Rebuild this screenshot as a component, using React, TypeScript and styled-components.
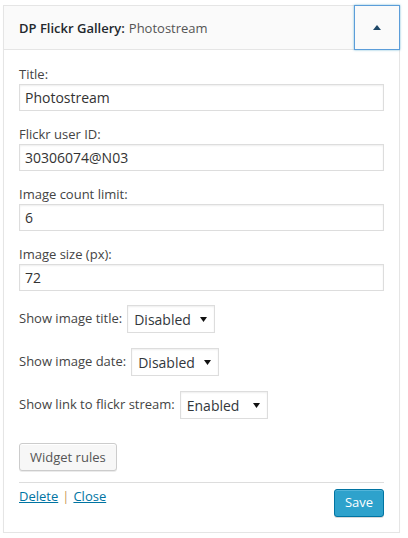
import * as React from "react";
import styled, { createGlobalStyle } from "styled-components";

const GlobalStyle = createGlobalStyle`
  html, body {
    margin: 0;
    padding: 0;
    background: #fff;
  }
  body {
    font-family: "Open Sans", "Noto Sans", sans-serif;
    font-size: 13px;
    color: #444;
  }
`;

const Page = styled.div`
  padding: 5px 0 0 3px;
`;

const Widget = styled.div`
  width: 397px;
  box-sizing: border-box;
  border: 1px solid #e5e5e5;
  background: #fff;
  box-shadow: 0 1px 1px rgba(0, 0, 0, 0.04);
`;

const Header = styled.div`
  display: flex;
  align-items: stretch;
  height: 43px;
  background: #fafafa;
  border-bottom: 1px solid #e5e5e5;
`;

const HeaderTitle = styled.h3`
  flex: 1;
  display: flex;
  align-items: center;
  margin: 0;
  padding-left: 15px;
  font-size: 13px;
  font-weight: 600;
  color: #23282d;
`;

const InTitle = styled.span`
  font-weight: 400;
  color: #555;
  margin-left: 4px;
`;

const Toggle = styled.button`
  width: 46px;
  margin: -1px -1px -1px 0;
  padding: 0;
  display: flex;
  align-items: center;
  justify-content: center;
  background: #fafafa;
  border: 1px solid #5b9dd9;
  box-shadow: 0 0 2px rgba(30, 140, 190, 0.6);
  cursor: pointer;
`;

const Body = styled.div`
  padding: 15px 15px 15px;
`;

const Fields = styled.div`
  display: flex;
  flex-direction: column;
  gap: 14px;
`;

const Field = styled.div`
  display: flex;
  flex-direction: column;
`;

const Label = styled.label`
  display: block;
  line-height: 18px;
  margin-bottom: 1px;
  color: #444;
`;

const TextInput = styled.input`
  box-sizing: border-box;
  width: 100%;
  height: 27px;
  margin: 0;
  padding: 0 5px;
  border: 1px solid #ddd;
  box-shadow: inset 0 1px 2px rgba(0, 0, 0, 0.07);
  font-family: inherit;
  font-size: 14px;
  color: #333;
  background: #fff;
  outline: none;
`;

const Options = styled.div`
  display: flex;
  flex-direction: column;
  gap: 15px;
  margin-top: 14px;
`;

const OptionRow = styled.div`
  display: flex;
  align-items: center;
  gap: 5px;
`;

const OptionLabel = styled.label`
  line-height: 18px;
  margin-top: -3px;
  color: #444;
`;

const SelectBox = styled.div`
  box-sizing: border-box;
  width: 88px;
  height: 28px;
  display: flex;
  align-items: center;
  border: 1px solid #ddd;
  background: #fff;
  box-shadow: inset 0 1px 2px rgba(0, 0, 0, 0.07);
  padding: 0 7px 0 0;
`;

const NativeSelect = styled.select`
  flex: 1;
  min-width: 0;
  appearance: none;
  -webkit-appearance: none;
  border: none;
  background: transparent;
  padding: 0 0 0 6px;
  margin: 0;
  font-family: inherit;
  font-size: 14px;
  color: #32373c;
  outline: none;
`;

const RulesButton = styled.button`
  margin-top: 24px;
  height: 28px;
  padding: 0 10px 1px;
  border: 1px solid #ccc;
  border-radius: 3px;
  background: #f7f7f7;
  box-shadow: inset 0 1px 0 #fff, 0 1px 0 rgba(0, 0, 0, 0.08);
  font-family: inherit;
  font-size: 13px;
  color: #555;
  cursor: pointer;
`;

const Footer = styled.div`
  margin-top: 11px;
  padding-top: 6px;
  border-top: 1px solid #ddd;
  display: flex;
  justify-content: space-between;
  align-items: flex-start;
`;

const Links = styled.div`
  margin-top: -2px;
  line-height: 18px;
  display: flex;
  gap: 4px;
`;

const Link = styled.a`
  color: #0074a2;
  text-decoration: underline;
  cursor: pointer;
`;

const Pipe = styled.span`
  color: #c99a55;
`;

const SaveButton = styled.button`
  width: 50px;
  height: 28px;
  padding: 0 0 2px;
  border: 1px solid #0074a2;
  border-radius: 3px;
  background: #2ea2cc;
  box-shadow: inset 0 1px 0 rgba(120, 200, 230, 0.5), 0 1px 0 rgba(0, 0, 0, 0.15);
  font-family: inherit;
  font-size: 13px;
  color: #fff;
  cursor: pointer;
`;

const ArrowUp = () => (
  <svg width="8" height="5" viewBox="0 0 8 5">
    <path d="M0 5 L4 0 L8 5 Z" fill="#1e4868" />
  </svg>
);

const ArrowDown = () => (
  <svg width="7" height="5" viewBox="0 0 7 5">
    <path d="M0 0 L7 0 L3.5 5 Z" fill="#111" />
  </svg>
);

const textFields = [
  { id: "title", label: "Title:", value: "Photostream" },
  { id: "user", label: "Flickr user ID:", value: "30306074@N03" },
  { id: "limit", label: "Image count limit:", value: "6" },
  { id: "size", label: "Image size (px):", value: "72" },
];

const selectFields = [
  { id: "showtitle", label: "Show image title:", value: "Disabled" },
  { id: "showdate", label: "Show image date:", value: "Disabled" },
  { id: "showlink", label: "Show link to flickr stream:", value: "Enabled" },
];

const App = () => {
  const [values, setValues] = React.useState<Record<string, string>>(() => {
    const v: Record<string, string> = {};
    [...textFields, ...selectFields].forEach((f) => (v[f.id] = f.value));
    return v;
  });

  const update = (id: string, val: string) => {
    setValues({ ...values, [id]: val });
  };

  return (
    <Page>
      <GlobalStyle />
      <Widget>
        <Header>
          <HeaderTitle>
            DP Flickr Gallery:<InTitle>Photostream</InTitle>
          </HeaderTitle>
          <Toggle aria-label="Toggle widget">
            <ArrowUp />
          </Toggle>
        </Header>
        <Body>
          <Fields>
            {textFields.map((f) => (
              <Field key={f.id}>
                <Label htmlFor={f.id}>{f.label}</Label>
                <TextInput
                  id={f.id}
                  value={values[f.id]}
                  onChange={(e) => update(f.id, e.target.value)}
                />
              </Field>
            ))}
          </Fields>
          <Options>
            {selectFields.map((f) => (
              <OptionRow key={f.id}>
                <OptionLabel htmlFor={f.id}>{f.label}</OptionLabel>
                <SelectBox>
                  <NativeSelect
                    id={f.id}
                    value={values[f.id]}
                    onChange={(e) => update(f.id, e.target.value)}
                  >
                    <option>Enabled</option>
                    <option>Disabled</option>
                  </NativeSelect>
                  <ArrowDown />
                </SelectBox>
              </OptionRow>
            ))}
          </Options>
          <RulesButton>Widget rules</RulesButton>
          <Footer>
            <Links>
              <Link>Delete</Link>
              <Pipe>|</Pipe>
              <Link>Close</Link>
            </Links>
            <SaveButton>Save</SaveButton>
          </Footer>
        </Body>
      </Widget>
    </Page>
  );
};

export default App;
